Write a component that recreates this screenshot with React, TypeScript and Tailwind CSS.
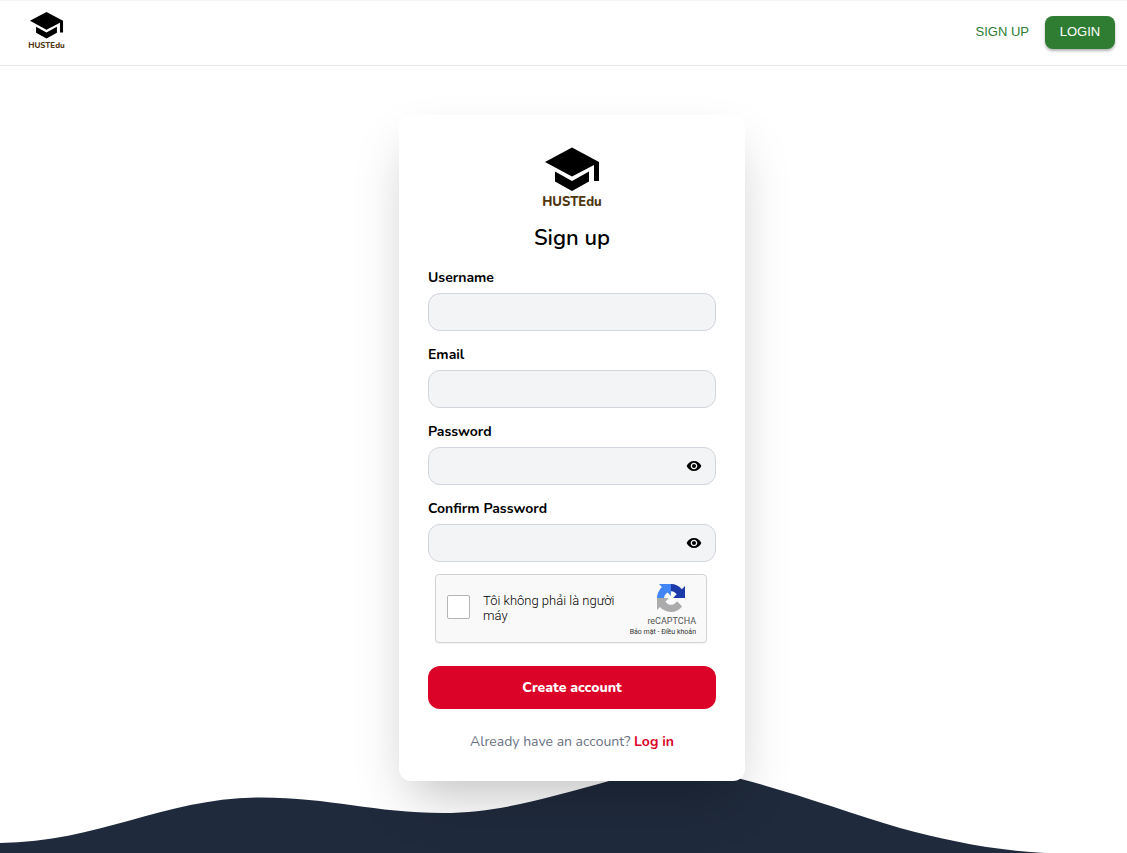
import { useState } from "react";
import { MdVisibility } from "react-icons/md";

function Logo({ className }: { className: string }) {
  return (
    <svg viewBox="0 0 60 62" className={className} role="img" aria-label="HUSTEdu" overflow="visible">
      <path d="M3 16 30 1.500 57 16V35H52V19L30 30.500Z" fill="#000" />
      <path d="M13 25.500 30 35 47 25.500V35.500L30 45 13 35.500Z" fill="#000" />
      <text
        x="30"
        y="60"
        textAnchor="middle"
        fontSize="13"
        fontWeight="800"
        fill="#4f3610"
        fontFamily="Nunito, Lato, sans-serif"
      >
        HUSTEdu
      </text>
    </svg>
  );
}

function RecaptchaMark() {
  return (
    <svg viewBox="0 0 64 64" className="h-7 w-7" aria-hidden="true">
      <path
        fill="#1c3aa9"
        d="M64 31.955l-.033-1.370V4.687l-7.160 7.160C50.948 4.674 42.033.093 32.050.093c-10.400 0-19.622 4.960-25.458 12.640l11.736 11.860a15.550 15.550 0 0 1 4.754-5.334c2.050-1.600 4.952-2.906 8.968-2.906.485 0 .860.057 1.135.163 4.976.393 9.288 3.140 11.828 7.124l-8.307 8.307L64 31.953"
      />
      <path
        fill="#4285f4"
        d="M31.862.094l-1.370.033H4.594l7.160 7.160C4.580 13.147 0 22.060 0 32.046c0 10.400 4.960 19.622 12.640 25.458L24.500 45.768a15.550 15.550 0 0 1-5.334-4.754c-1.600-2.050-2.906-4.952-2.906-8.968 0-.485.057-.860.163-1.135.393-4.976 3.140-9.288 7.124-11.828l8.307 8.307L31.860.095"
      />
      <path
        fill="#ababab"
        d="M.001 32.045l.033 1.370v25.898l7.160-7.160c5.860 7.173 14.774 11.754 24.760 11.754 10.400 0 19.622-4.960 25.458-12.640l-11.736-11.860a15.550 15.550 0 0 1-4.754 5.334c-2.050 1.600-4.952 2.906-8.968 2.906-.485 0-.860-.057-1.135-.163-4.976-.393-9.288-3.140-11.828-7.124l8.307-8.307c-10.522.040-22.400.066-27.295-.005"
      />
    </svg>
  );
}

type FieldProps = { id: string; label: string; type: string };

function Field({ id, label, type }: FieldProps) {
  const [shown, setShown] = useState(false);
  const secret = type === "password";
  return (
    <div>
      <label htmlFor={id} className="mb-[5px] block text-sm leading-5 font-bold text-black">
        {label}
      </label>
      <div className="flex h-[38px] items-center rounded-xl border border-gray-300 bg-gray-100">
        <input
          id={id}
          name={id}
          type={secret && shown ? "text" : type}
          className="h-full min-w-0 flex-1 bg-transparent px-3 text-sm outline-none"
        />
        {secret && (
          <button
            type="button"
            aria-label="Toggle password visibility"
            onClick={() => setShown(!shown)}
            className="mr-[13px] text-black"
          >
            <MdVisibility className="h-4 w-4" />
          </button>
        )}
      </div>
    </div>
  );
}

function Recaptcha() {
  return (
    <div className="mx-[7px] mt-3 flex h-[69px] w-[272px] items-center rounded-sm border border-[#d3d3d3] bg-[#f9f9f9] pr-[10px] pl-[11px] font-[Roboto,sans-serif] shadow-xs">
      <input
        id="robot"
        type="checkbox"
        className="mb-1 h-6 w-[23px] shrink-0 appearance-none rounded-xs border border-[#b5b5b5] bg-white"
      />
      <label htmlFor="robot" className="mb-0.5 ml-[13px] flex-1 text-[13px] leading-[15px] font-light text-black">
        Tôi không phải là người máy
      </label>
      <div className="mt-1 flex shrink-0 flex-col items-end text-[#555]">
        <div className="mr-[11px]">
          <RecaptchaMark />
        </div>
        <span className="mt-1 text-[9px] leading-[11px]">reCAPTCHA</span>
        <span className="text-[7px] leading-[10px] text-[#333]">
          <a href="#privacy">Bảo mật</a> - <a href="#terms">Điều khoản</a>
        </span>
      </div>
    </div>
  );
}

export default function App() {
  return (
    <div className="relative isolate flex min-h-screen flex-col overflow-hidden bg-white font-[Nunito,'Open_Sans',sans-serif]">
      <header className="flex h-[66px] items-center justify-between border-y border-t-gray-100 border-b-gray-200 pr-3 pb-0.5 pl-7">
        <a href="#home" className="mb-1">
          <Logo className="h-[38px] w-[37px]" />
        </a>
        <nav className="flex items-center gap-4 font-['Liberation_Sans',Arial,sans-serif] text-[13px]">
          <a href="#signup" className="text-[#2e7d32]">
            SIGN UP
          </a>
          <button
            type="button"
            className="h-[33px] w-[70px] rounded-lg bg-[#2e7d32] text-white shadow-[0_2px_3px_rgba(0,0,0,0.3)]"
          >
            LOGIN
          </button>
        </nav>
      </header>

      <svg
        viewBox="0 0 1127 90"
        preserveAspectRatio="none"
        className="absolute bottom-0 left-0 -z-10 h-[90px] w-full"
        aria-hidden="true"
      >
        <path
          fill="#1f2a3c"
          d="M0 80C100 79 165 34.500 261 34.500C330 34.500 375 50 443 50C500 50 550 34 609 18C650 5 700 3 741 16C795 30 850 50 900 65C945 77 990 87 1045 90H0Z"
        />
      </svg>

      <main className="flex justify-center pt-[49px] pb-[72px] pl-[17px]">
        <form
          className="w-[346px] rounded-xl bg-white px-[29px] pt-[31px] pb-[29px] shadow-2xl"
          onSubmit={(e) => e.preventDefault()}
        >
          <Logo className="mx-auto h-[62px] w-[60px]" />
          <h1 className="mt-4 text-center text-[22px] leading-7 font-semibold text-black">Sign up</h1>
          <div className="mt-4 flex flex-col gap-[14px]">
            <Field id="username" label="Username" type="text" />
            <Field id="email" label="Email" type="email" />
            <Field id="password" label="Password" type="password" />
            <Field id="confirm" label="Confirm Password" type="password" />
          </div>
          <Recaptcha />
          <button
            type="submit"
            className="mt-[23px] h-[43px] w-full rounded-xl bg-[#db0428] text-sm font-extrabold text-white"
          >
            Create account
          </button>
          <p className="mt-[23px] text-center text-sm leading-5 text-gray-500">
            Already have an account?{" "}
            <a href="#login" className="font-bold text-[#db0428]">
              Log in
            </a>
          </p>
        </form>
      </main>
    </div>
  );
}
